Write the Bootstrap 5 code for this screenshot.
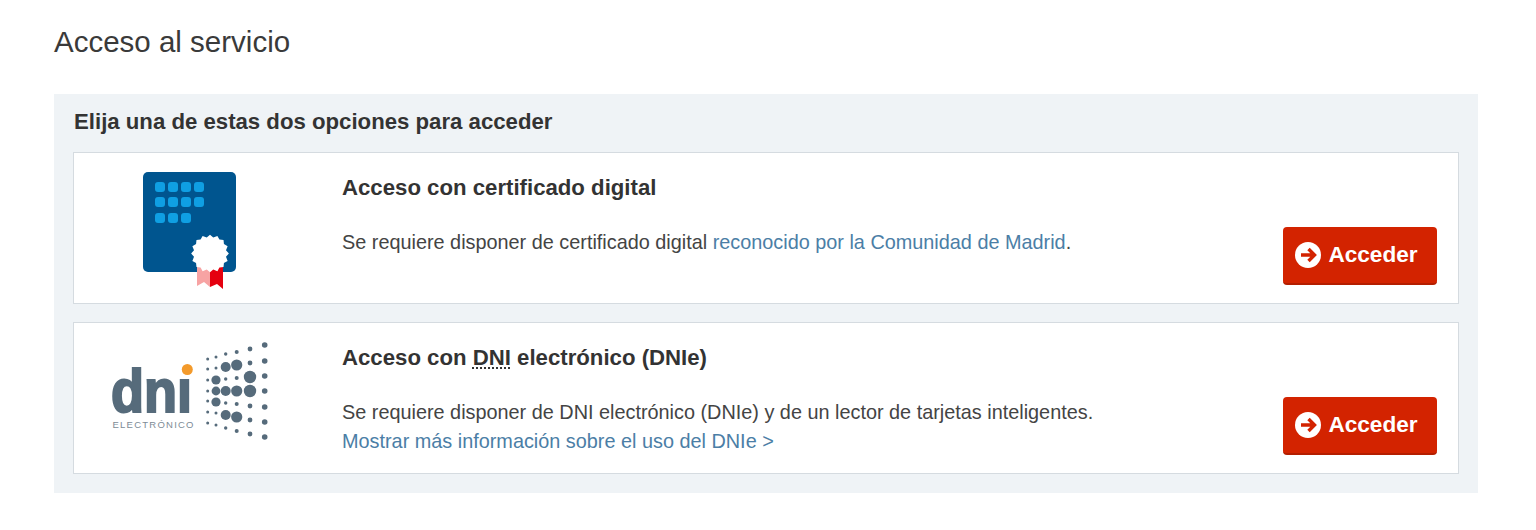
<!DOCTYPE html>
<html lang="es">
<head>
  <meta charset="UTF-8" />
  <meta name="viewport" content="width=device-width, initial-scale=1.0" />
  <title>Acceso al servicio</title>
  <link href="https://cdn.jsdelivr.net/npm/bootstrap@5.3.0/dist/css/bootstrap.min.css" rel="stylesheet" />
  <style>
    body { font-family: "Liberation Sans", Arial, sans-serif; color: #333; background: #fff; overflow: hidden; }
    .page-wrap { padding: 25px 58px 0 54px; }
    .page-title { font-size: 29.5px; font-weight: 400; line-height: 34px; margin: 0 0 35px; color: #3a3a3a; }
    .access-panel { background: #eff3f6; padding: 15px 19px 19px 19px; }
    .panel-title { font-size: 22.2px; font-weight: 700; line-height: 26px; margin: 0 0 17px 1px; color: #333; }
    .access-box { height: 152px; background: #fff; border: 1px solid #d5dbe0; }
    .access-box + .access-box { margin-top: 18px; }
    .logo-cell { width: 268px; flex: none; padding: 7px 0 0 16px; }
    .text-cell { padding-top: 22px; }
    .option-title { font-size: 22.2px; font-weight: 700; line-height: 26px; margin: 0 0 27px; color: #333; }
    .option-text { font-size: 19.85px; line-height: 29px; margin: 0; color: #444; }
    .option-text a { color: #4b7ea6; text-decoration: none; }
    abbr.dni-abbr { text-decoration: underline dotted; cursor: help; }
    .btn-acceder { width: 154px; height: 58px; margin: 74px 21px 0 0; background: #d32300; border: 0; border-bottom: 2px solid #b41e00; border-radius: 4px; color: #fff; font-size: 22.6px; font-weight: 700; padding: 0 7px 0 0; }
    .btn-acceder:hover { background: #d32300; color: #fff; }
    .btn-icon { margin-right: 7px; }
    .logo-text { font-family: "Liberation Sans", Arial, sans-serif; }
    .logo-mark { stroke: #566b7b; stroke-width: 2.2px; }
  </style>
</head>
<body>
  <main class="page-wrap">
    <h1 class="page-title">Acceso al servicio</h1>
    <section class="access-panel">
      <h2 class="panel-title">Elija una de estas dos opciones para acceder</h2>

      <div class="access-box d-flex">
        <div class="logo-cell">
          <svg width="200" height="140" viewBox="0 0 200 140" aria-hidden="true">
            <rect x="53" y="12" width="93" height="100" rx="5" fill="#00558f" />
            <g fill="#0f9fe3">
              <rect x="65" y="22" width="10" height="10" rx="3" /><rect x="78" y="22" width="10" height="10" rx="3" /><rect x="91" y="22" width="10" height="10" rx="3" /><rect x="104" y="22" width="10" height="10" rx="3" />
              <rect x="65" y="37" width="10" height="10" rx="3" /><rect x="78" y="37" width="10" height="10" rx="3" /><rect x="91" y="37" width="10" height="10" rx="3" /><rect x="104" y="37" width="10" height="10" rx="3" />
              <rect x="65" y="53" width="10" height="10" rx="3" /><rect x="78" y="53" width="10" height="10" rx="3" /><rect x="91" y="53" width="10" height="10" rx="3" />
            </g>
            <path d="M107 100 H120 V127 L114 122 L107 126 Z" fill="#f7a3a3" />
            <path d="M120 100 H133 V129 L127 124 L120 127 Z" fill="#e5000f" />
            <path transform="translate(120 89) scale(.82) translate(-120 -88.500)" d="M120 71 l4 3.500 l5 -2 l2.500 4.500 l5 .5 l.5 5 l4.500 2.500 l-2 5 l3.500 4 l-3.500 4 l2 5 l-4.500 2.500 l-.5 5 l-5 .5 l-2.500 4.500 l-5 -2 l-4 3.500 l-4 -3.500 l-5 2 l-2.500 -4.500 l-5 -.5 l-.5 -5 l-4.500 -2.500 l2 -5 l-3.500 -4 l3.500 -4 l-2 -5 l4.500 -2.500 l.5 -5 l5 -.5 l2.500 -4.500 l5 2 Z" fill="#fff" />
          </svg>
        </div>
        <div class="text-cell flex-grow-1">
          <h3 class="option-title">Acceso con certificado digital</h3>
          <p class="option-text">Se requiere disponer de certificado digital <a href="#">reconocido por la Comunidad de Madrid</a>.</p>
        </div>
        <button type="button" class="btn btn-acceder d-flex align-items-center justify-content-center flex-shrink-0">
          <svg width="26" height="26" viewBox="0 0 26 26" class="btn-icon" aria-hidden="true">
            <circle cx="13" cy="13" r="13" fill="#fff" />
            <path d="M6 13 H19 M13.500 7 L19.500 13 L13.500 19" fill="none" stroke="#d32300" stroke-width="3.400" />
          </svg>
          Acceder
        </button>
      </div>

      <div class="access-box d-flex">
        <div class="logo-cell">
          <svg width="200" height="130" viewBox="0 0 200 130" aria-hidden="true" id="dniLogo">
            <text x="21" y="82" font-size="61" font-weight="700" fill="#566b7b" class="logo-text logo-mark" textLength="81" lengthAdjust="spacingAndGlyphs">dni</text>
            <rect x="88" y="32" width="18" height="15" fill="#fff" />
            <circle cx="97.300" cy="39.500" r="5.500" fill="#f39a2b" />
            <text x="22.500" y="97.500" font-size="9.500" fill="#7d8b96" class="logo-text" textLength="81">ELECTRÓNICO</text>
          </svg>
        </div>
        <div class="text-cell flex-grow-1">
          <h3 class="option-title">Acceso con <abbr class="dni-abbr" title="Documento Nacional de Identidad">DNI</abbr> electrónico (DNIe)</h3>
          <p class="option-text">Se requiere disponer de DNI electrónico (DNIe) y de un lector de tarjetas inteligentes.<br /><a href="#">Mostrar más información sobre el uso del DNIe &gt;</a></p>
        </div>
        <button type="button" class="btn btn-acceder d-flex align-items-center justify-content-center flex-shrink-0">
          <svg width="26" height="26" viewBox="0 0 26 26" class="btn-icon" aria-hidden="true">
            <circle cx="13" cy="13" r="13" fill="#fff" />
            <path d="M6 13 H19 M13.500 7 L19.500 13 L13.500 19" fill="none" stroke="#d32300" stroke-width="3.400" />
          </svg>
          Acceder
        </button>
      </div>
    </section>
  </main>

  <script src="https://cdn.jsdelivr.net/npm/bootstrap@5.3.0/dist/js/bootstrap.bundle.min.js"></script>
  <script>
    // dot field of the dni logo: x, then [y, radius] pairs, in the logo's own units
    const dots = [
      [117.7, [[29,1.5],[39,1.5],[50,1.5],[61,1.5],[71,1.5],[82,1.5],[93,1.5]]],
      [126, [[27,1.5],[38,1.5],[50,4.6],[61,4.4],[72,4.6],[83,1.5],[95,1.5]]],
      [135.7, [[24,1.7],[37,5],[49,1.7],[61,5],[73,1.7],[85,5],[98,1.7]]],
      [146.7, [[22,2],[35,5.6],[48,2],[61,5.6],[74,2],[87,5.6],[101,2]]],
      [160, [[19,2.4],[33,2.4],[47,6.2],[61,6.2],[76,2.4],[90,2.4],[104,2.4]]],
      [174.7, [[15,2.8],[31,2.8],[46,2.8],[61,2.8],[77,2.8],[92,2.8],[107,2.8]]]
    ];
    const logo = document.getElementById('dniLogo');
    dots.forEach(([x, col]) => col.forEach(([y, r]) => {
      const c = document.createElementNS('http://www.w3.org/2000/svg', 'circle');
      c.setAttribute('cx', x);
      c.setAttribute('cy', y);
      c.setAttribute('r', r);
      c.setAttribute('fill', '#566b7b');
      logo.appendChild(c);
    }));
  </script>
</body>
</html>
